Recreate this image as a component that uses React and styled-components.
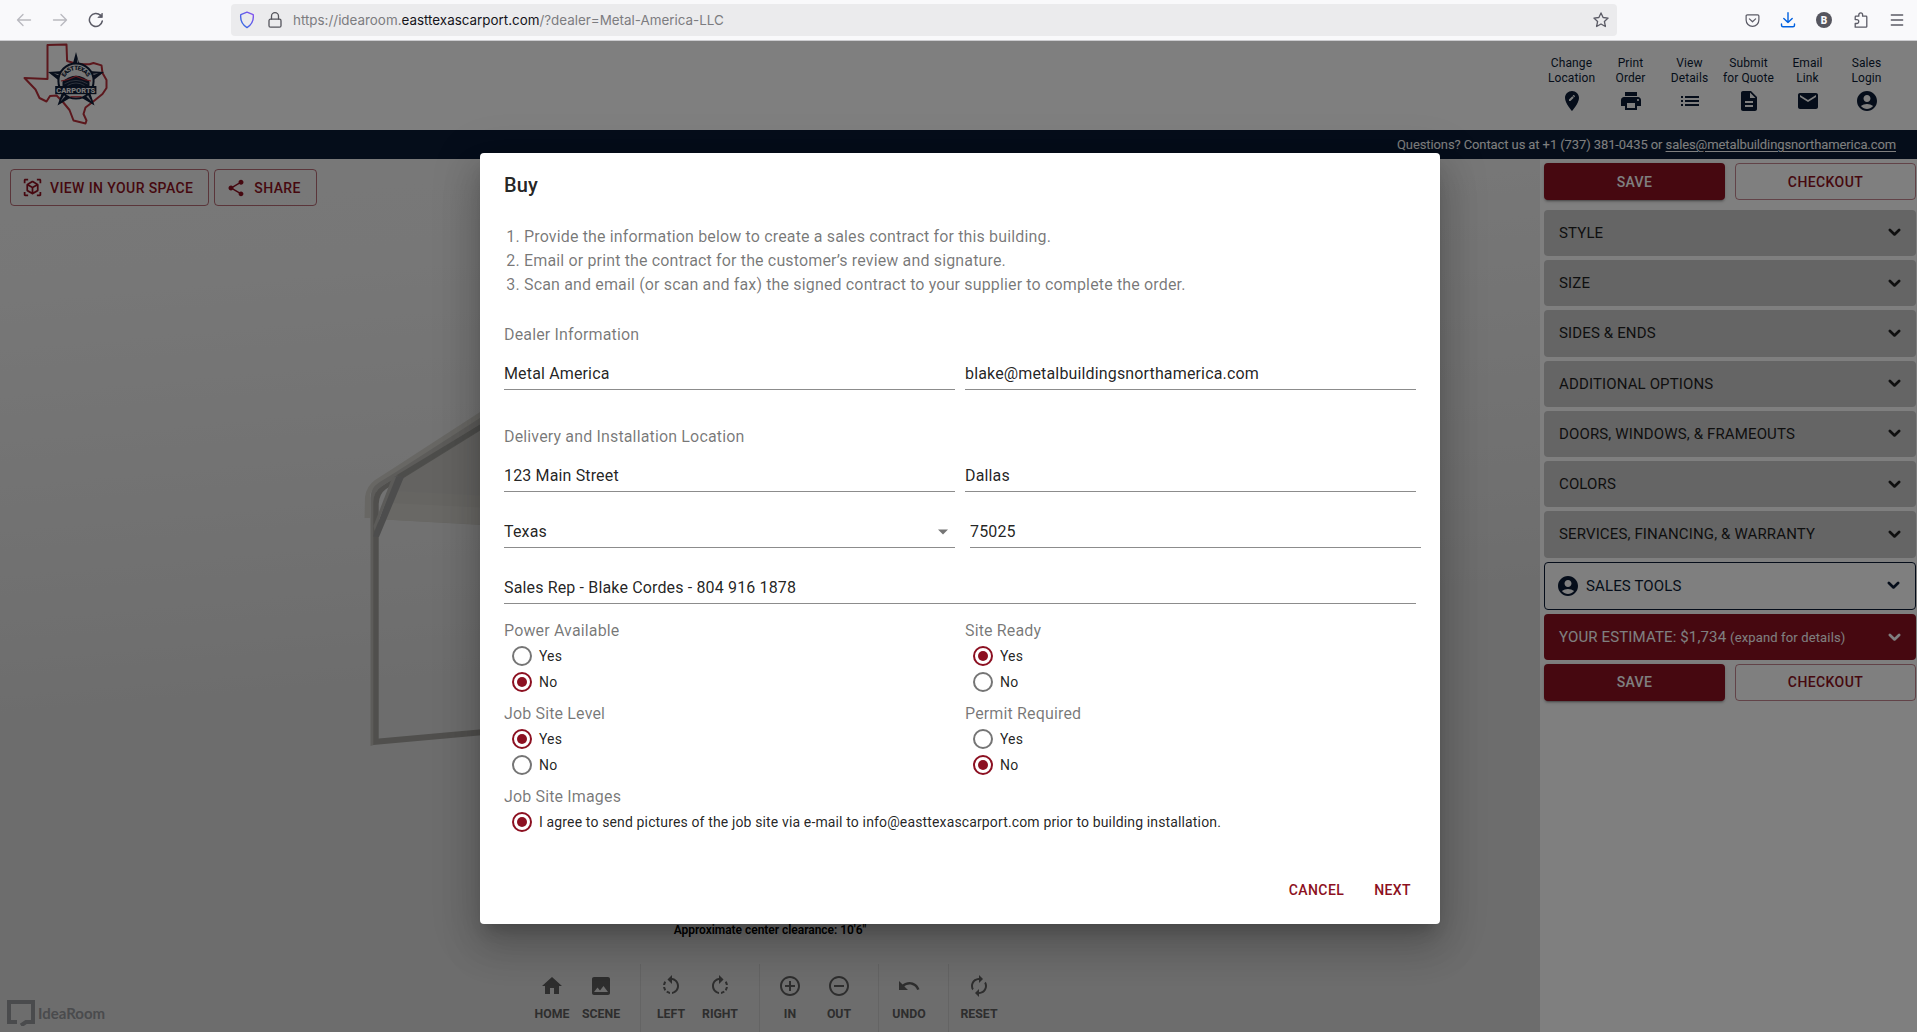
import React from "react";
import styled, { createGlobalStyle, css } from "styled-components";
import {
  MdEditLocation,
  MdPrint,
  MdList,
  MdDescription,
  MdEmail,
  MdAccountCircle,
  MdShare,
  MdHome,
  MdImage,
  MdRotateLeft,
  MdRotateRight,
  MdAddCircleOutline,
  MdRemoveCircleOutline,
  MdUndo,
  MdAutorenew,
} from "react-icons/md";

const red = "#8c1021";
const navy = "#0b1b35";

const GlobalStyle = createGlobalStyle`
  *, *::before, *::after { box-sizing: border-box; }
  html, body { margin: 0; height: 100%; overflow: hidden; }
  body {
    font-family: Roboto, "Liberation Sans", sans-serif;
    font-size: 16px;
    -webkit-font-smoothing: antialiased;
  }
  svg { display: block; flex: none; }
`;

const Window = styled.div`
  width: 100vw;
  height: 100vh;
  display: flex;
  flex-direction: column;
  overflow: hidden;
  background: #fff;
`;

/* ---------- Browser toolbar ---------- */

const Chrome = styled.div`
  flex: none;
  height: 41px;
  display: flex;
  align-items: center;
  padding: 0 9px 0 12px;
  background: #f9f9fb;
  border-bottom: 1px solid #cccccf;
  color: #5b5b66;
`;

const ChromeButton = styled.div`
  width: 24px;
  height: 24px;
  flex: none;
  margin-right: ${(p) => p.$gap ?? 12}px;
  display: grid;
  place-items: center;
  opacity: ${(p) => (p.$faded ? 0.4 : 1)};
`;

const UrlBar = styled.div`
  height: 32px;
  width: 1386px;
  flex: none;
  margin: 0 123px 0 123px;
  padding: 0 8px;
  display: flex;
  align-items: center;
  gap: 12px;
  border-radius: 4px;
  background: #ebebed;
`;

const UrlText = styled.div`
  flex: 1;
  margin-left: -2px;
  padding-top: 1px;
  font: 400 13.4px/31px Inter, "Liberation Sans", sans-serif;
  color: #7c7c80;
  white-space: nowrap;
  span { color: #15141a; }
`;

const ChromeActions = styled.div`
  display: flex;
  gap: 12.2px;
`;

/* ---------- Page ---------- */

const Page = styled.div`
  position: relative;
  flex: 1;
  min-height: 0;
  display: flex;
  flex-direction: column;
`;

const Header = styled.header`
  height: 89px;
  flex: none;
  display: flex;
  justify-content: space-between;
  padding: 0 21px 0 20px;
  background: #fff;
`;

const HeaderNav = styled.nav`
  display: flex;
  padding-top: 15px;
`;

const HeaderLink = styled.div`
  width: 59px;
  display: flex;
  flex-direction: column;
  align-items: center;
  gap: 3px;
  color: ${navy};
  text-align: center;
  font-size: 12px;
  line-height: 15px;
  letter-spacing: 0.1px;
  white-space: pre-line;
`;

const ContactBar = styled.div`
  flex: none;
  height: 29px;
  padding-right: 21px;
  display: flex;
  align-items: center;
  justify-content: flex-end;
  background: ${navy};
  color: #fff;
  font-size: 13px;
  letter-spacing: -0.1px;
  white-space: pre;
  a { color: inherit; text-decoration: underline; text-underline-offset: 2px; }
`;

const Main = styled.main`
  flex: 1;
  min-height: 0;
  display: flex;
`;

const Scene = styled.section`
  position: relative;
  flex: 1;
  display: flex;
  flex-direction: column;
  align-items: center;
  justify-content: space-between;
  background: linear-gradient(175deg, #f1f1f1 0, #efefef 12%, #e8e8e8 28%, #dfdfdf 48%, #dbdbdb 55%, #dbdbdb 100%);
`;

const Model = styled.svg`
  position: absolute;
  left: 0;
  top: 0;
`;

const SceneButtons = styled.div`
  position: relative;
  align-self: flex-start;
  display: flex;
  gap: 5px;
  padding: 10px;
`;

const buttonText = css`
  font-family: inherit;
  font-weight: 500;
  font-size: 14px;
  letter-spacing: 0.4px;
  text-transform: uppercase;
  white-space: nowrap;
`;

const SceneButton = styled.button`
  ${buttonText}
  height: 37px;
  padding: 0 15px 0 11px;
  display: flex;
  align-items: center;
  gap: ${(p) => p.$gap ?? 7}px;
  border: 1px solid rgba(140, 16, 33, 0.6);
  border-radius: 4px;
  background: transparent;
  color: ${red};
`;

const SceneFooter = styled.div`
  position: relative;
  display: flex;
  flex-direction: column;
  align-items: center;
  gap: 26px;
`;

const Clearance = styled.div`
  font-weight: 600;
  font-size: 12px;
  line-height: 16px;
  letter-spacing: -0.03px;
  color: #000;
`;

const ViewTools = styled.div`
  display: flex;
  height: 68px;
`;

const ToolGroup = styled.div`
  display: flex;
  padding: 10px 14px 0 6px;
  border-right: 1px solid ${(p) => (p.$last ? "transparent" : "#c9c9c9")};
`;

const Tool = styled.div`
  width: 49px;
  display: flex;
  flex-direction: column;
  align-items: center;
  gap: 6px;
  color: #5c5c5c;
  font-weight: 700;
  font-size: 12.3px;
  line-height: 20px;
`;

const Brand = styled.div`
  position: absolute;
  left: 7px;
  bottom: 6px;
  display: flex;
  align-items: center;
  gap: 3px;
  color: #94969a;
  font: 700 15px/20px Lato, sans-serif;
`;

/* ---------- Side panel ---------- */

const Panel = styled.aside`
  width: 377px;
  flex: none;
  padding: 4.3px 1px 0 4px;
  display: flex;
  flex-direction: column;
  background: #fff;
`;

const ButtonPair = styled.div`
  display: grid;
  grid-template-columns: 1fr 1fr;
  gap: 10px;
  margin-bottom: ${(p) => p.$after ?? 0}px;
`;

const PanelButton = styled.button`
  ${buttonText}
  height: 36.5px;
  border-radius: 4px;
  border: ${(p) => (p.$solid ? "0" : "1px solid rgba(140, 16, 33, 0.5)")};
  background: ${(p) => (p.$solid ? red : "transparent")};
  color: ${(p) => (p.$solid ? "#fff" : red)};
  box-shadow: ${(p) =>
    p.$solid
      ? "0 3px 1px -2px rgba(0,0,0,.2), 0 2px 2px rgba(0,0,0,.14), 0 1px 5px rgba(0,0,0,.12)"
      : "none"};
`;

const sectionTones = {
  gray: css`background: #cacaca; color: #1e1e1e;`,
  outline: css`background: #fff; color: ${navy}; border: 1px solid ${navy}; height: 48.4px; padding: 0 15px 0 11px;`,
  red: css`background: ${red}; color: #fff;`,
};

const Section = styled.div`
  height: 46.25px;
  margin-bottom: 4px;
  padding: 0 15px;
  display: flex;
  align-items: center;
  border-radius: 4px;
  font-size: 15px;
  letter-spacing: 0.14px;
  white-space: pre;
  ${(p) => sectionTones[p.$tone]}
`;

const SectionLabel = styled.div`
  flex: 1;
  display: flex;
  align-items: center;
  gap: 6px;
  small { font-size: 13px; }
`;

/* ---------- Dialog ---------- */

const Backdrop = styled.div`
  position: absolute;
  inset: 0;
  display: flex;
  justify-content: center;
  align-items: flex-start;
  padding: 112px 0 0 3px;
  background: rgba(0, 0, 0, 0.5);
`;

const Dialog = styled.div`
  width: 960px;
  height: 771px;
  padding: 16px 24px 16px;
  display: flex;
  flex-direction: column;
  border-radius: 4px;
  background: #fff;
  color: rgba(0, 0, 0, 0.87);
  box-shadow: 0 11px 15px -7px rgba(0, 0, 0, 0.2), 0 24px 38px 3px rgba(0, 0, 0, 0.14),
    0 9px 46px 8px rgba(0, 0, 0, 0.12);
`;

const Title = styled.h2`
  margin: 0 0 24px;
  font-size: 20px;
  font-weight: 500;
  line-height: 32px;
  letter-spacing: 0.15px;
`;

const Steps = styled.ol`
  margin: 0 0 26px;
  padding: 0 0 0 20px;
  color: rgba(0, 0, 0, 0.54);
  line-height: 24px;
  letter-spacing: 0.15px;
`;

const Label = styled.div`
  height: 24px;
  line-height: 24px;
  letter-spacing: 0.15px;
  color: rgba(0, 0, 0, 0.54);
`;

const FieldRow = styled.div`
  display: grid;
  grid-template-columns: ${(p) => (p.$single ? "1fr" : "451px 451px")};
  column-gap: ${(p) => p.$gap ?? 10}px;
  margin: ${(p) => p.$before ?? 24}px 0 ${(p) => p.$after ?? 0}px;
`;

const Field = styled.div`
  height: 32px;
  display: flex;
  align-items: center;
  justify-content: space-between;
  padding-right: 4px;
  border-bottom: 1px solid rgba(0, 0, 0, 0.45);
  line-height: 31px;
  letter-spacing: 0.15px;
  white-space: nowrap;
`;

const Questions = styled.div`
  display: grid;
  grid-template-columns: 451px 451px;
  column-gap: 10px;
  row-gap: 7px;
  margin-top: 15px;
`;

const Question = styled.div`
  grid-column: ${(p) => (p.$wide ? "1 / -1" : "auto")};
`;

const Option = styled.div`
  height: 26px;
  margin-left: 8px;
  display: flex;
  align-items: center;
  gap: 7px;
  font-size: 14px;
  line-height: 24px;
  letter-spacing: 0.14px;
`;

const Radio = styled.span`
  width: 20px;
  height: 20px;
  display: grid;
  place-items: center;
  border: 2px solid ${(p) => (p.$on ? red : "#757575")};
  border-radius: 50%;
  &::after {
    content: "";
    width: 10px;
    height: 10px;
    border-radius: 50%;
    background: ${(p) => (p.$on ? red : "transparent")};
  }
`;

const Actions = styled.div`
  margin-top: auto;
  display: flex;
  justify-content: flex-end;
  gap: 14px;
  margin-right: -3px;
`;

const TextButton = styled.button`
  ${buttonText}
  height: 36px;
  padding: 0 8px;
  border: 0;
  background: transparent;
  color: ${red};
`;

/* ---------- Drawings ---------- */

const Stroke = ({ size = 16, box = 16, width = 1.3, color = "currentColor", children }) => (
  <svg width={size} height={size} viewBox={`0 0 ${box} ${box}`} fill="none" stroke={color}
    strokeWidth={width} strokeLinecap="round" strokeLinejoin="round">
    {children}
  </svg>
);

const Chevron = () => (
  <svg width="13" height="9" viewBox="0 0 13 9" fill="none" stroke="currentColor" strokeWidth="2.7"
    strokeLinecap="round" strokeLinejoin="round">
    <path d="M1.9 2l4.6 4.4L11.1 2" />
  </svg>
);

const CubeScan = () => (
  <svg width="21" height="21" viewBox="0 0 24 24" fill="currentColor">
    <path d="M17,22V20H20V17H22V20.5C22,20.89 21.84,21.24 21.54,21.54C21.24,21.84 20.89,22 20.5,22H17M7,22H3.5C3.11,22 2.76,21.84 2.46,21.54C2.16,21.24 2,20.89 2,20.5V17H4V20H7V22M17,2H20.5C20.89,2 21.24,2.16 21.54,2.46C21.84,2.76 22,3.11 22,3.5V7H20V4H17V2M7,2V4H4V7H2V3.5C2,3.11 2.16,2.76 2.46,2.46C2.76,2.16 3.11,2 3.5,2H7M13,17.25L17,14.95V10.36L13,12.66V17.25M12,10.92L16,8.63L12,6.28L8,8.63L12,10.92M7,14.95L11,17.25V12.66L7,10.36V14.95M18.23,7.59C18.73,7.91 19,8.34 19,8.91V15.23C19,15.8 18.73,16.23 18.23,16.55L12.75,19.73C12.25,20.05 11.75,20.05 11.25,19.73L5.77,16.55C5.27,16.23 5,15.8 5,15.23V8.91C5,8.34 5.27,7.91 5.77,7.59L11.25,4.41C11.5,4.28 11.75,4.22 12,4.22C12.25,4.22 12.5,4.28 12.75,4.41L18.23,7.59Z" />
  </svg>
);

const Logo = () => (
  <svg width="90" height="89" viewBox="20.500 41 90 89">
    <path d="M48 45 67 44.6 67.6 61 75 63.2 84 64.3 90 64.3 94 63 102 65.4 103 73 107 80 107 88 103 94 95 100.500 86 107.500 84 114 87 120.500 86 123.500 74 120.500 70 110 63 101.500 57 95.500 50.500 96 47 101.500 40 98 36 89.500 25 78 48 79Z"
      fill="none" stroke="#b8303a" strokeWidth="2" strokeLinejoin="round" />
    <path d="M76.500 52 81.500 70.500 104.500 72 88 85 95 105.500 76.500 94.500 58 105.500 65 85 48.500 72 71.500 70.500Z"
      fill="#101e38" />
    <path d="M77.500 58 79.500 67 77.500 66.500ZM99 73.300 91 76 90 74ZM92 101.500 86.500 96 88.500 95ZM61 101.500 66 96 65 94.500ZM54 73.300 63 77 64 75Z" fill="#d4d7dd" />
    <circle cx="76.500" cy="81" r="17.600" fill="#f0f0f0" stroke="#101e38" strokeWidth="2" />
    <path id="arc" d="M64.800 78.800a12.200 12.200 0 0 1 23.400 0" fill="none" />
    <text fontFamily="Roboto, sans-serif" fontWeight="900" fontSize="6" fill="#101e38">
      <textPath href="#arc" startOffset="50%" textAnchor="middle" textLength="28">EAST TEXAS</textPath>
    </text>
    <path d="M63 81.500Q76.500 70 90 81.500V87H63Z" fill="#101e38" />
    <path d="M61.500 81Q70 79.500 76.500 76.200Q83 79.500 91.500 81" fill="none" stroke="#c5323c" strokeWidth="1.200" />
    <path d="M65 83.800Q76.500 77 88 83.800M68 85.500Q76.500 80.500 85 85.500" fill="none" stroke="#8d95a4" strokeWidth=".6" />
    <rect x="55.700" y="86" width="41.200" height="8.200" fill="#101e38" />
    <text x="76.300" y="92.700" textAnchor="middle" textLength="39" lengthAdjust="spacingAndGlyphs"
      fontFamily="Roboto, sans-serif" fontWeight="900" fontSize="7.300" fill="#f0f0f0">CARPORTS</text>
    <path d="M71 96.700H82" stroke="#c5323c" strokeWidth="1.200" />
  </svg>
);

const Carport = () => (
  <Model width="1540" height="873" viewBox="0 159 1540 873" aria-hidden="true">
    <path d="M402 477 490 418V525.500L384 519.500Z" fill="#cccac5" />
    <path d="M402 477 490 420V496L396 491Z" fill="#c8c7c3" />
    <path d="M388 503 490 508V525L384 519.500Z" fill="#d3d1ca" />
    <path d="M490 405.500 393 468.500 375 480Q366.500 486 365 497L364.500 518H370V496Q371 489 379 483.500L490 414Z" fill="#d0cfc9" />
    <path d="M490 411.500 396 472 379 482.500Q370.500 488 370.500 498V746L374 745V500Q374.500 491 382 486L490 418Z" fill="#bab9b4" />
    <path d="M490 418 382 486Q373.500 491.500 373.300 502V745L490 734.500V728.500L378.700 738.500V504Q379 494 386 489L490 424.500Z" fill="#a09f9a" />
    <path d="M490 418.500 396 475.500 404 477 490 423.500Z" fill="#9b9a96" />
    <path d="M395 476 404 477 379 537 373 536.500Z" fill="#9b9b9b" />
    <path d="M392 478 396.500 476 374.500 531 373.500 526Z" fill="#b8b7b3" />
  </Model>
);

const IdeaRoomMark = () => (
  <svg width="28" height="26" viewBox="0 0 28 26">
    <path d="M10 22H2V2H26V22H19L14 25.500" fill="none" stroke="currentColor" strokeWidth="4" />
  </svg>
);

/* ---------- Data ---------- */

const headerLinks = [
  ["Change\nLocation", MdEditLocation],
  ["Print\nOrder", MdPrint],
  ["View\nDetails", MdList],
  ["Submit\nfor Quote", MdDescription],
  ["Email\nLink", MdEmail],
  ["Sales\nLogin", MdAccountCircle],
];

const toolGroups = [
  [["HOME", MdHome], ["SCENE", MdImage]],
  [["LEFT", MdRotateLeft], ["RIGHT", MdRotateRight]],
  [["IN", MdAddCircleOutline], ["OUT", MdRemoveCircleOutline]],
  [["UNDO", MdUndo]],
  [["RESET", MdAutorenew]],
];

const sections = [
  "STYLE",
  "SIZE",
  "SIDES & ENDS",
  "ADDITIONAL OPTIONS",
  "DOORS, WINDOWS, & FRAMEOUTS",
  "COLORS",
  "SERVICES, FINANCING, & WARRANTY",
];

const questions = [
  ["Power Available", "No"],
  ["Site Ready", "Yes"],
  ["Job Site Level", "Yes"],
  ["Permit Required", "No"],
];

const SaveCheckout = ({ after }) => (
  <ButtonPair $after={after}>
    <PanelButton $solid>Save</PanelButton>
    <PanelButton>Checkout</PanelButton>
  </ButtonPair>
);

const BrowserBar = () => (
  <Chrome>
    <ChromeButton $faded>
      <Stroke><path d="M14.500 8H1.500M7 2.500L1.500 8L7 13.500" /></Stroke>
    </ChromeButton>
    <ChromeButton $faded>
      <Stroke><path d="M1.500 8H14.500M9 2.500L14.500 8L9 13.500" /></Stroke>
    </ChromeButton>
    <ChromeButton $gap={0}>
      <Stroke width={1.5}>
        <path d="M14.300 9A6.500 6.500 0 1 1 12.500 3.300" />
        <path d="M14.300 1.500V5.500H10.300Z" fill="currentColor" strokeWidth=".8" />
      </Stroke>
    </ChromeButton>
    <UrlBar>
      <svg width="16" height="18" viewBox="0 0 16 18" fill="none" strokeWidth="1.400" strokeLinejoin="round">
        <defs>
          <linearGradient id="shield" x1="0" y1="1" x2="1" y2="0">
            <stop offset="0" stopColor="#2a6ee0" />
            <stop offset="1" stopColor="#8a50f0" />
          </linearGradient>
        </defs>
        <path stroke="url(#shield)" d="M8 1.200 14.200 3.600Q15.300 12 8 16.600Q.7 12 1.800 3.600Z" />
      </svg>
      <Stroke size={16} color="#55555c">
        <rect x="2" y="7.200" width="12" height="8" rx="1.500" />
        <path d="M4.500 7V4.200a3.500 3.500 0 0 1 7 0V7" />
      </Stroke>
      <UrlText>https://idearoom.<span>easttexascarport.com</span>/?dealer=Metal-America-LLC</UrlText>
      <Stroke><path d="M8 .9l2.100 4.600 5 .6-3.700 3.400 1 5L8 12l-4.400 2.500 1-5L.9 6.100l5-.6z" /></Stroke>
    </UrlBar>
    <ChromeActions>
      <ChromeButton $gap={0}>
        <Stroke size={15}><path d="M2.500 2H13.500Q14.800 2 14.800 3.300V7.500A6.800 6.800 0 0 1 1.200 7.500V3.300Q1.200 2 2.500 2ZM4.700 6.300L8 9.400L11.300 6.300" /></Stroke>
      </ChromeButton>
      <ChromeButton $gap={0}>
        <Stroke color="#0061e0" width={1.4}><path d="M8 .8V10.500M3.800 6.500L8 10.600L12.200 6.500M1.500 12V13.200Q1.500 14.700 3 14.700H13Q14.500 14.700 14.500 13.200V12" /></Stroke>
      </ChromeButton>
      <ChromeButton $gap={0}>
        <svg width="16" height="16" viewBox="0 0 16 16">
          <circle cx="8" cy="8" r="8" fill="#56565f" />
          <text x="8" y="11.600" textAnchor="middle" fontFamily="Roboto, sans-serif" fontWeight="900" fontSize="10" fill="#f9f9fb">B</text>
        </svg>
      </ChromeButton>
      <ChromeButton $gap={0}>
        <Stroke>
          <path d="M2.200 15.200V11.500H3.800A1.900 1.900 0 0 0 3.800 7.600H2.200V5Q2.200 4.200 3 4.200H5.800V2.800A1.900 1.900 0 0 1 9.600 2.800V4.200H13Q13.800 4.200 13.800 5V14.400Q13.800 15.200 13 15.200Z" />
        </Stroke>
      </ChromeButton>
      <ChromeButton $gap={0}>
        <Stroke><path d="M2.300 3H13.700M2.300 8H13.700M2.300 13H13.700" /></Stroke>
      </ChromeButton>
    </ChromeActions>
  </Chrome>
);

const BuyDialog = () => (
  <Dialog role="dialog" aria-label="Buy">
    <Title>Buy</Title>
    <Steps>
      <li>Provide the information below to create a sales contract for this building.</li>
      <li>Email or print the contract for the customer’s review and signature.</li>
      <li>Scan and email (or scan and fax) the signed contract to your supplier to complete the order.</li>
    </Steps>
    <Label>Dealer Information</Label>
    <FieldRow $before={11} $after={35}>
      <Field>Metal America</Field>
      <Field>blake@metalbuildingsnorthamerica.com</Field>
    </FieldRow>
    <Label>Delivery and Installation Location</Label>
    <FieldRow $before={11}>
      <Field>123 Main Street</Field>
      <Field>Dallas</Field>
    </FieldRow>
    <FieldRow $gap={15}>
      <Field>
        Texas
        <svg width="16" height="6" viewBox="0 0 16 6"><path d="M3 .5h10l-5 5z" fill="#757575" /></svg>
      </Field>
      <Field>75025</Field>
    </FieldRow>
    <FieldRow $single>
      <Field>Sales Rep - Blake Cordes - 804 916 1878</Field>
    </FieldRow>
    <Questions>
      {questions.map(([label, answer]) => (
        <Question key={label}>
          <Label>{label}</Label>
          {["Yes", "No"].map((o) => (
            <Option key={o}><Radio $on={o === answer} />{o}</Option>
          ))}
        </Question>
      ))}
      <Question $wide>
        <Label>Job Site Images</Label>
        <Option>
          <Radio $on />
          I agree to send pictures of the job site via e-mail to info@easttexascarport.com prior to building installation.
        </Option>
      </Question>
    </Questions>
    <Actions>
      <TextButton>Cancel</TextButton>
      <TextButton>Next</TextButton>
    </Actions>
  </Dialog>
);

export default function App() {
  return (
    <Window>
      <GlobalStyle />
      <BrowserBar />
      <Page>
        <Header>
          <Logo />
          <HeaderNav>
            {headerLinks.map(([label, Icon]) => (
              <HeaderLink key={label}>
                {label}
                <Icon size={24} />
              </HeaderLink>
            ))}
          </HeaderNav>
        </Header>
        <ContactBar>
          Questions? Contact us at +1 (737) 381-0435 or <a>sales@metalbuildingsnorthamerica.com</a>
        </ContactBar>
        <Main>
          <Scene>
            <Carport />
            <SceneButtons>
              <SceneButton><CubeScan />View in your space</SceneButton>
              <SceneButton $gap={8}><MdShare size={20} />Share</SceneButton>
            </SceneButtons>
            <SceneFooter>
              <Clearance>Approximate center clearance: 10'6"</Clearance>
              <ViewTools>
                {toolGroups.map((group, i) => (
                  <ToolGroup key={i} $last={i === toolGroups.length - 1}>
                    {group.map(([label, Icon]) => (
                      <Tool key={label}><Icon size={24} />{label}</Tool>
                    ))}
                  </ToolGroup>
                ))}
              </ViewTools>
            </SceneFooter>
            <Brand><IdeaRoomMark />IdeaRoom</Brand>
          </Scene>
          <Panel>
            <SaveCheckout after={10} />
            {sections.map((s) => (
              <Section key={s} $tone="gray"><SectionLabel>{s}</SectionLabel><Chevron /></Section>
            ))}
            <Section $tone="outline">
              <SectionLabel><MdAccountCircle size={24} />SALES TOOLS</SectionLabel>
              <Chevron />
            </Section>
            <Section $tone="red">
              <SectionLabel><span>YOUR ESTIMATE: $1,734 <small>(expand for details)</small></span></SectionLabel>
              <Chevron />
            </Section>
            <SaveCheckout />
          </Panel>
        </Main>
        <Backdrop>
          <BuyDialog />
        </Backdrop>
      </Page>
    </Window>
  );
}
